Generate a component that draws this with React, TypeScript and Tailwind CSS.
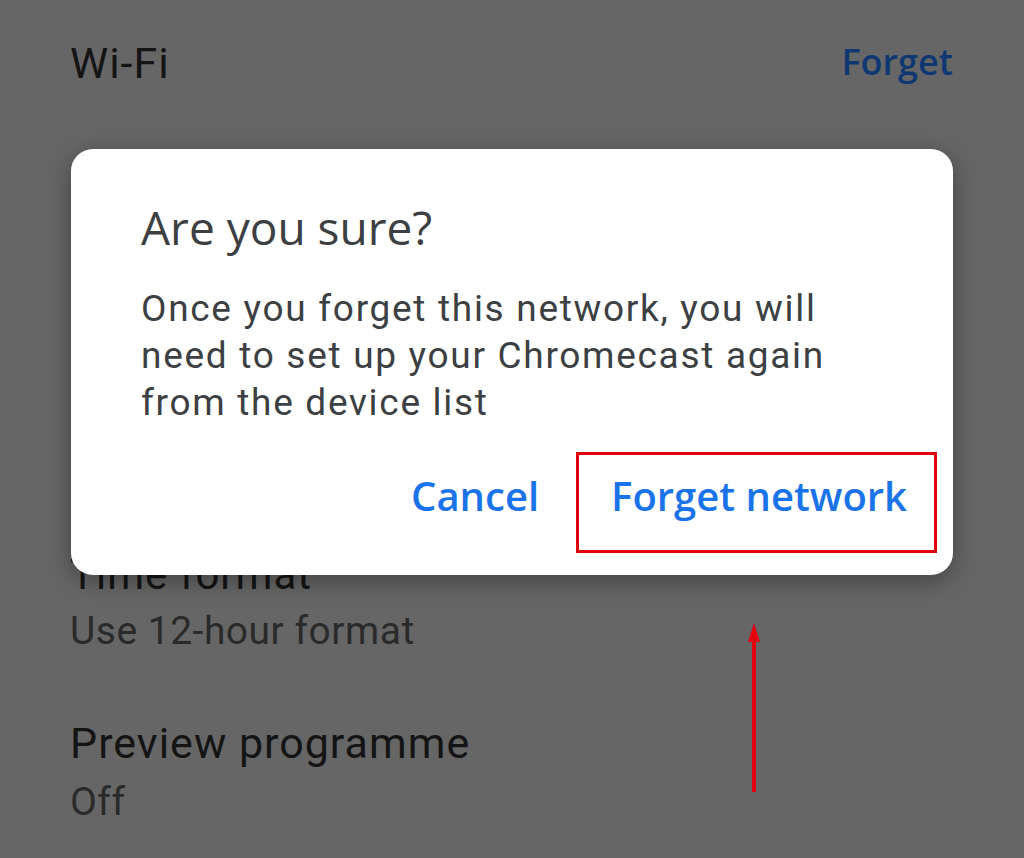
export default function App() {
  return (
    <div className="relative h-[858px] w-[1024px] overflow-hidden bg-[#666666] font-['Roboto',sans-serif]">
      {/* settings list behind the dialog */}
      <div className="flex items-start justify-between pl-[70px] pr-[71px] pt-[42px]">
        <span className="text-[43px] leading-none tracking-[1px] text-[#141414]">Wi-Fi</span>
        <span className="mt-[2px] font-['Open_Sans',sans-serif] text-[36px] font-semibold leading-none text-[#0f3873]">
          Forget
        </span>
      </div>

      <div className="flex flex-col pl-[70px]">
        <span className="mt-[469px] text-[42px] leading-none tracking-[1px] text-[#141414]">Time format</span>
        <span className="mt-[16px] text-[39px] leading-none tracking-[0.5px] text-[#2a2a2a]">Use 12-hour format</span>
        <span className="mt-[71px] text-[43px] leading-none tracking-[1px] text-[#141414]">Preview programme</span>
        <span className="mt-[18px] text-[39px] leading-none tracking-[0.5px] text-[#2a2a2a]">Off</span>
      </div>

      {/* dialog */}
      <div className="absolute left-[71px] top-[149px] flex h-[426px] w-[882px] flex-col rounded-[22px] bg-white pl-[70px] pr-[46px] pt-[55px] shadow-[0_6px_24px_rgba(0,0,0,0.35)]">
        <h2 className="font-['Open_Sans',sans-serif] text-[46px] leading-none text-[#3c4043]">Are you sure?</h2>
        <p className="mt-[35px] text-[37px] leading-[47px] tracking-[1.7px] text-[#3c4043]">
          Once you forget this network, you will
          <br />
          need to set up your Chromecast again
          <br />
          from the device list
        </p>
        <div className="mt-[50px] flex justify-end gap-[72px] font-['Open_Sans',sans-serif] text-[40px] font-semibold leading-none text-[#1a73e8]">
          <button>Cancel</button>
          <button>Forget network</button>
        </div>
      </div>

      {/* annotation */}
      <div className="absolute left-[576px] top-[452px] h-[101px] w-[361px] border-[3px] border-[#e3000f]" />
      <svg className="absolute left-[744px] top-[620px]" width="20" height="175" viewBox="0 0 20 175">
        <line x1="10" y1="18" x2="10" y2="172" stroke="#e3000f" strokeWidth="4" />
        <polygon points="10,3 4,22 16,22" fill="#e3000f" />
      </svg>
    </div>
  );
}
